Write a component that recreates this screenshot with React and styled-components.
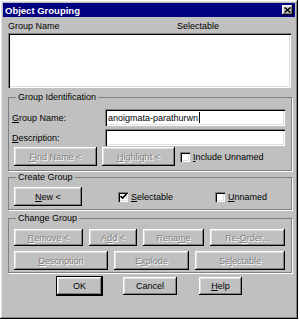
import React from 'react'
import styled, { createGlobalStyle } from 'styled-components'

const Global = createGlobalStyle`
    body {
        margin: 0;
        background: #fff;
        font-family: 'Liberation Sans', Arial, sans-serif;
        font-size: 9px;
    }
`
const raised = `
    box-shadow: inset -1px -1px #000, inset 1px 1px #fff,
        inset -2px -2px #808080, inset 2px 2px #dfdfdf;
`
const sunken = `
    box-shadow: inset 1px 1px #808080, inset 2px 2px #000,
        inset -1px -1px #fff, inset -2px -2px #dfdfdf;
`
const Window = styled.div`
    width: 298px;
    height: 319px;
    box-sizing: border-box;
    padding: 3px;
    background: #c0c0c0;
    color: #000;
    ${raised}
    display: flex;
    flex-direction: column;
`
const TitleBar = styled.div`
    height: 14px;
    background: #000080;
    color: #fff;
    font-weight: bold;
    font-size: 9.5px;
    display: flex;
    align-items: center;
    justify-content: space-between;
    padding: 0 2px 0 2px;
`
const CloseBtn = styled.div`
    width: 11px;
    height: 10px;
    background: #c0c0c0;
    ${raised}
    display: flex;
    align-items: center;
    justify-content: center;
`
const Body = styled.div`
    padding: 0 3px 0 5px;
    display: flex;
    flex-direction: column;
`
const Header = styled.div`
    height: 16px;
    display: grid;
    grid-template-columns: 169px 1fr;
    align-items: end;
    padding-bottom: 2px;
    box-sizing: border-box;
    color: #000;
`
const ListBox = styled.div`
    height: 55px;
    width: 283px;
    background: #fff;
    ${sunken}
`
const Group = styled.fieldset`
    margin: ${p => p.mt}px 0 0 0;
    padding: ${p => p.pt}px 3px ${p => p.pb}px 3px;
    border: 1px solid #808080;
    box-shadow: 1px 1px 0 #fff;
    min-width: 0;
    display: flex;
    flex-direction: column;
    gap: ${p => p.gap || 0}px;
`
const Legend = styled.legend`
    margin-left: 4px;
    padding: 0 2px;
    line-height: 10px;
    height: 10px;
`
const FieldRow = styled.div`
    display: grid;
    grid-template-columns: 93px 180px;
    height: 17px;
    align-items: center;
    margin-bottom: ${p => p.mb || 0}px;
`
const Input = styled.div`
    height: 17px;
    box-sizing: border-box;
    background: #fff;
    ${sunken}
    padding: 0 3px;
    display: flex;
    align-items: center;
`
const Caret = styled.span`
    display: inline-block;
    width: 1px;
    height: 11px;
    background: #000;
    margin-left: 1px;
`
const ButtonRow = styled.div`
    display: flex;
    align-items: center;
    gap: ${p => p.gap || 6}px;
    padding-left: ${p => p.pl || 0}px;
`
const Button = styled.div`
    width: ${p => p.w}px;
    height: ${p => p.h || 18}px;
    box-sizing: border-box;
    flex: none;
    display: flex;
    align-items: center;
    justify-content: center;
    background: #c0c0c0;
    ${raised}
    color: ${p => p.disabled ? '#808080' : '#000'};
    text-shadow: ${p => p.disabled ? '1px 1px 0 #fff' : 'none'};
    outline: ${p => p.def ? '1px solid #000' : 'none'};
`
const Check = styled.label`
    display: flex;
    align-items: center;
    gap: 3px;
    width: ${p => p.w ? p.w + 'px' : 'auto'};
    flex: none;
`
const Box = styled.span`
    width: 10px;
    height: 10px;
    box-sizing: border-box;
    background: #fff;
    ${sunken}
    display: flex;
    align-items: center;
    justify-content: center;
`
const Footer = styled.div`
    display: flex;
    margin-top: 4px;
    padding-left: 49px;
`

const CheckBox = ({ checked, children, w }) => (
    <Check w={w}>
        <Box>
            {checked && (
                <svg width="7" height="7" viewBox="0 0 7 7">
                    <path d="M0.5 3 L2.5 5 L6.5 1" stroke="#000" strokeWidth="1.6" fill="none" />
                </svg>
            )}
        </Box>
        <span>{children}</span>
    </Check>
)

export default function App() {
    return (
        <>
            <Global />
            <Window>
                <TitleBar>
                    <span>Object Grouping</span>
                    <CloseBtn>
                        <svg width="7" height="6" viewBox="0 0 7 6">
                            <path d="M0.5 0.5 L6.5 5.5 M6.5 0.5 L0.5 5.5" stroke="#000" strokeWidth="1.4" />
                        </svg>
                    </CloseBtn>
                </TitleBar>
                <Body>
                    <Header>
                        <span>Group Name</span>
                        <span>Selectable</span>
                    </Header>
                    <ListBox />

                    <Group mt={4} pt={7} pb={4}>
                        <Legend>Group Identification</Legend>
                        <FieldRow mb={3}>
                            <span><u>G</u>roup Name:</span>
                            <Input>anoigmata-parathurwn<Caret /></Input>
                        </FieldRow>
                        <FieldRow mb={1}>
                            <span><u>D</u>escription:</span>
                            <Input />
                        </FieldRow>
                        <ButtonRow gap={5} pl={2}>
                            <Button w={83} h={19} disabled><span><u>F</u>ind Name &lt;</span></Button>
                            <Button w={73} h={19} disabled><span><u>H</u>ighlight &lt;</span></Button>
                            <CheckBox><u>I</u>nclude Unnamed</CheckBox>
                        </ButtonRow>
                    </Group>

                    <Group mt={1} pt={5} pb={3}>
                        <Legend>Create Group</Legend>
                        <ButtonRow gap={0} pl={2}>
                            <Button w={68} h={19} style={{ marginRight: 30 }}><span><u>N</u>ew &lt;</span></Button>
                            <CheckBox checked w={91}><u>S</u>electable</CheckBox>
                            <CheckBox><u>U</u>nnamed</CheckBox>
                        </ButtonRow>
                    </Group>

                    <Group mt={3} pt={6} pb={2} gap={5}>
                        <Legend>Change Group</Legend>
                        <ButtonRow pl={2}>
                            <Button w={69} h={17} disabled><span><u>R</u>emove &lt;</span></Button>
                            <Button w={48} h={17} disabled><span>A<u>d</u>d &lt;</span></Button>
                            <Button w={61} h={17} disabled><span>Rena<u>m</u>e</span></Button>
                            <Button w={75} h={17} disabled><span>Re-<u>O</u>rder...</span></Button>
                        </ButtonRow>
                        <ButtonRow pl={2}>
                            <Button w={94} h={19} disabled><span><u>D</u>escription</span></Button>
                            <Button w={75} h={19} disabled><span>E<u>x</u>plode</span></Button>
                            <Button w={90} h={19} disabled><span>Se<u>l</u>ectable</span></Button>
                        </ButtonRow>
                    </Group>

                    <Footer>
                        <Button w={45} def style={{ marginRight: 21 }}>OK</Button>
                        <Button w={54} style={{ marginRight: 22 }}>Cancel</Button>
                        <Button w={43}><span><u>H</u>elp</span></Button>
                    </Footer>
                </Body>
            </Window>
        </>
    )
}
